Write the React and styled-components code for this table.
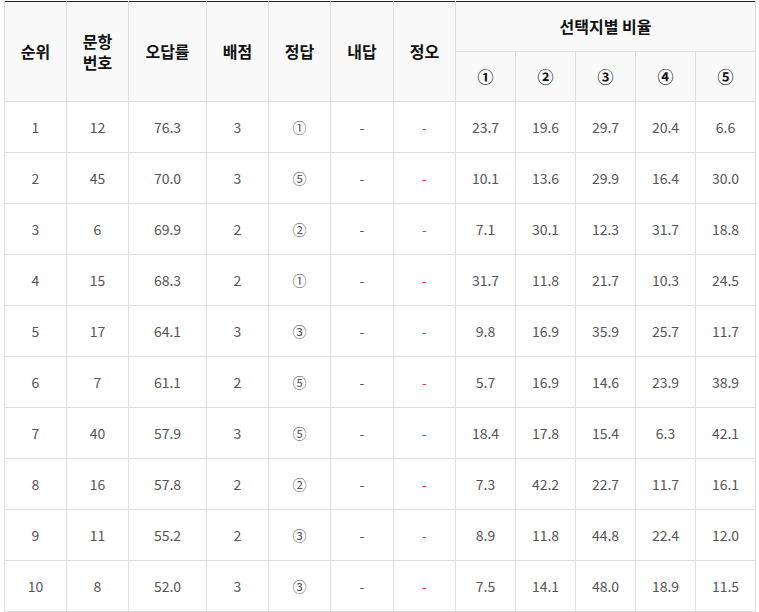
import React from 'react';
import styled, { createGlobalStyle } from 'styled-components';

const GlobalStyle = createGlobalStyle`
  body {
    margin: 0;
    background: #fff;
    font-family: "Noto Sans CJK KR", "Noto Sans", sans-serif;
  }
`;

const rows = [
  [1, 12, '76.3', 3, '①', ['23.7', '19.6', '29.7', '20.4', '6.6']],
  [2, 45, '70.0', 3, '⑤', ['10.1', '13.6', '29.9', '16.4', '30.0']],
  [3, 6, '69.9', 2, '②', ['7.1', '30.1', '12.3', '31.7', '18.8']],
  [4, 15, '68.3', 2, '①', ['31.7', '11.8', '21.7', '10.3', '24.5']],
  [5, 17, '64.1', 3, '③', ['9.8', '16.9', '35.9', '25.7', '11.7']],
  [6, 7, '61.1', 2, '⑤', ['5.7', '16.9', '14.6', '23.9', '38.9']],
  [7, 40, '57.9', 3, '⑤', ['18.4', '17.8', '15.4', '6.3', '42.1']],
  [8, 16, '57.8', 2, '②', ['7.3', '42.2', '22.7', '11.7', '16.1']],
  [9, 11, '55.2', 2, '③', ['8.9', '11.8', '44.8', '22.4', '12.0']],
  [10, 8, '52.0', 3, '③', ['7.5', '14.1', '48.0', '18.9', '11.5']],
];

const widths = [62, 62, 78, 62, 62, 63, 62, 60, 60, 60, 60, 60];
const choices = ['①', '②', '③', '④', '⑤'];

class App extends React.Component {
  render() {
    return (
      <Page>
        <GlobalStyle />
        <Table>
          <colgroup>
            {widths.map((w, i) => (
              <col key={i} style={{ width: w }} />
            ))}
          </colgroup>
          <thead>
            <tr>
              <Th rowSpan={2}>순위</Th>
              <Th rowSpan={2}>
                <Line>문항</Line>
                <Line>번호</Line>
              </Th>
              <Th rowSpan={2}>오답률</Th>
              <Th rowSpan={2}>배점</Th>
              <Th rowSpan={2}>정답</Th>
              <Th rowSpan={2}>내답</Th>
              <Th rowSpan={2}>정오</Th>
              <Th colSpan={5} $h={50}>선택지별 비율</Th>
            </tr>
            <tr>
              {choices.map((c) => (
                <Th key={c} $h={50}>{c}</Th>
              ))}
            </tr>
          </thead>
          <tbody>
            {rows.map(([rank, no, rate, score, ans, ratios]) => (
              <tr key={rank}>
                <Td>{rank}</Td>
                <Td>{no}</Td>
                <Td>{rate}</Td>
                <Td>{score}</Td>
                <Td>{ans}</Td>
                <Td>-</Td>
                <Td $wrong>-</Td>
                {ratios.map((r, i) => (
                  <Td key={i}>{r}</Td>
                ))}
              </tr>
            ))}
          </tbody>
        </Table>
      </Page>
    );
  }
}

const Page = styled.div`
  padding: 1px 0 0 4px;
`;

const Table = styled.table`
  table-layout: fixed;
  width: 752px;
  border-collapse: collapse;
  border-top: 1px solid #222;
`;

const Th = styled.th`
  height: ${(p) => (p.$h ? `${p.$h - 1}px` : 'auto')};
  padding: 0;
  background: #f9f9f9;
  border: 1px solid #ddd;
  border-top: none;
  font-size: 16px;
  font-weight: 700;
  line-height: 21px;
  color: #111;
  text-align: center;
  vertical-align: middle;
`;

const Line = styled.span`
  display: block;
  line-height: 21px;
`;

const Td = styled.td`
  height: 50px;
  padding: 0;
  border: 1px solid #ddd;
  font-size: 14px;
  color: ${(p) => (p.$wrong ? '#e6306e' : '#555')};
  text-align: center;
  vertical-align: middle;
`;

export default App;
